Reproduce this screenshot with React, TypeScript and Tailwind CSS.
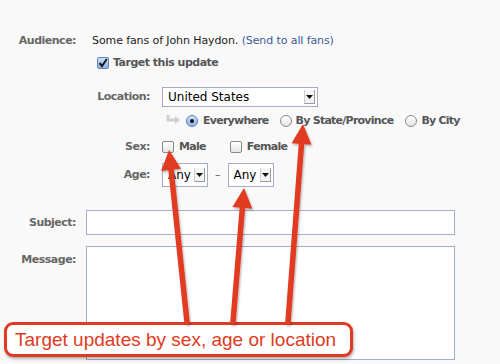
const font = { fontFamily: '"DejaVu Sans", "Liberation Sans", sans-serif' };

function Select({ label, className }: { label: string; className: string }) {
  return (
    <div className={`flex items-center border border-[#a4adc9] bg-white pl-[5px] ${className}`}>
      <span className="flex-1 text-[12px] text-black">{label}</span>
      <span className="mr-[2px] flex h-[14px] w-[11px] items-center justify-center border-b border-l border-r border-b-[#9a9a9a] border-l-[#d0d0d0] border-r-[#9a9a9a] bg-[#f4f4f4]">
        <svg width="7" height="4" viewBox="0 0 7 4">
          <path d="M0 0h7L3.5 4z" fill="#111" />
        </svg>
      </span>
    </div>
  );
}

function Check({ checked }: { checked?: boolean }) {
  return (
    <span
      className={`flex h-[12px] w-[12px] items-center justify-center rounded-[2px] border ${
        checked ? "border-[#5b84c4] bg-gradient-to-b from-[#cfe0f5] to-[#8fb3e3]" : "border-[#8a8a8a] bg-gradient-to-b from-white to-[#e6e6e6]"
      }`}
    >
      {checked && (
        <svg width="10" height="10" viewBox="0 0 10 10">
          <path d="M1.5 5l2.5 3L8.8 1" stroke="#1a1a1a" strokeWidth="2" fill="none" />
        </svg>
      )}
    </span>
  );
}

function Radio({ on }: { on?: boolean }) {
  return (
    <span
      className={`flex h-[12px] w-[12px] items-center justify-center rounded-full border ${
        on ? "border-[#4d79b8] bg-gradient-to-b from-[#d5e4f7] to-[#8fb3e3]" : "border-[#8a8a8a] bg-gradient-to-b from-white to-[#e3e3e3]"
      }`}
    >
      {on && <span className="h-[4px] w-[4px] rounded-full bg-[#111]" />}
    </span>
  );
}

function arrow(x1: number, y1: number, x2: number, y2: number) {
  const dx = x2 - x1;
  const dy = y2 - y1;
  const len = Math.hypot(dx, dy);
  const ux = dx / len;
  const uy = dy / len;
  const bx = x2 - ux * 20;
  const by = y2 - uy * 20;
  const nx = -uy;
  const ny = ux;
  return {
    shaft: `M${x1} ${y1} L${bx + ux * 2} ${by + uy * 2}`,
    head: `M${x2} ${y2} L${bx + nx * 10} ${by + ny * 10} L${bx - nx * 10} ${by - ny * 10} Z`,
  };
}

const arrows = [arrow(187, 322, 169, 150), arrow(233, 322, 244, 188), arrow(288, 322, 303, 124)];

export default function App() {
  return (
    <div className="relative h-[364px] w-[500px] overflow-hidden bg-[#f9f9f9] text-[11px] leading-[14px]" style={font}>
      <div className="pt-[34px]">
        {/* Audience */}
        <div className="flex">
          <div className="w-[76px] text-right font-bold tracking-[-0.5px] text-[#666]">Audience:</div>
          <div className="ml-[16px] tracking-[-0.1px] text-[#222]">
            Some fans of John Haydon. <span className="text-[#3b5998]">(Send to all fans)</span>
          </div>
        </div>
        <div className="ml-[97px] mt-[8px] flex items-center gap-[4px]">
          <Check checked />
          <span className="font-bold tracking-[-0.5px] text-[#555]">Target this update</span>
        </div>

        {/* Location */}
        <div className="mt-[17px] flex items-center">
          <div className="w-[150px] text-right font-bold tracking-[-0.5px] text-[#666]">Location:</div>
          <Select label="United States" className="ml-[12px] h-[20px] w-[156px]" />
        </div>
        <div className="ml-[166px] mt-[7px] flex items-center font-bold tracking-[-0.75px] text-[#555]">
          <svg width="16" height="12" viewBox="0 0 16 12" className="mr-[4px]">
            <path d="M2 0v5h8" stroke="#cfcfcf" strokeWidth="3" fill="none" />
            <path d="M9 1l5 4-5 4z" fill="#cfcfcf" />
          </svg>
          <Radio on />
          <span className="ml-[5px]">Everywhere</span>
          <span className="ml-[11px]"><Radio /></span>
          <span className="ml-[4px]">By State/Province</span>
          <span className="ml-[12px]"><Radio /></span>
          <span className="ml-[4px]">By City</span>
        </div>

        {/* Sex */}
        <div className="mt-[12px] flex items-center">
          <div className="w-[150px] text-right font-bold tracking-[-0.5px] text-[#666]">Sex:</div>
          <span className="ml-[12px]"><Check /></span>
          <span className="ml-[5px] font-bold tracking-[-0.7px] text-[#555]">Male</span>
          <span className="ml-[24px]"><Check /></span>
          <span className="ml-[5px] font-bold tracking-[-0.7px] text-[#555]">Female</span>
        </div>

        {/* Age */}
        <div className="mt-[9px] flex items-center">
          <div className="w-[150px] text-right font-bold tracking-[-0.5px] text-[#666]">Age:</div>
          <Select label="Any" className="ml-[12px] h-[24px] w-[46px]" />
          <span className="mx-[7px] text-[#555]">–</span>
          <Select label="Any" className="h-[24px] w-[46px]" />
        </div>

        {/* Subject */}
        <div className="mt-[23px] flex items-center">
          <div className="w-[76px] text-right font-bold tracking-[-0.5px] text-[#666]">Subject:</div>
          <div className="ml-[10px] h-[25px] w-[369px] border border-[#a4adc9] bg-white" />
        </div>

        {/* Message */}
        <div className="mt-[11px] flex items-start">
          <div className="w-[76px] pt-[7px] text-right font-bold tracking-[-0.5px] text-[#666]">Message:</div>
          <div className="ml-[10px] h-[114px] w-[369px] border border-[#a4adc9] bg-white" />
        </div>
      </div>

      {/* Annotation callout */}
      <div
        className="absolute left-[4px] top-[322px] flex h-[35px] w-[349px] items-center whitespace-nowrap rounded-[9px] border-[3px] border-[#e13a22] bg-white pl-[8px] text-[19px] text-[#e13a22] shadow-[1px_2px_3px_rgba(0,0,0,0.3)]"
        style={{ fontFamily: '"Liberation Sans", Arial, sans-serif' }}
      >
        Target updates by sex, age or location
      </div>
      <svg className="pointer-events-none absolute left-0 top-0" width="500" height="364">
        <defs>
          <filter id="sh" x="-20%" y="-20%" width="140%" height="140%">
            <feDropShadow dx="1" dy="1.5" stdDeviation="1" floodColor="#000" floodOpacity="0.3" />
          </filter>
        </defs>
        {arrows.map((a, i) => (
          <g key={i} filter="url(#sh)">
            <path d={a.shaft} stroke="#e13a22" strokeWidth="5.5" strokeLinecap="round" />
            <path d={a.head} fill="#e13a22" />
          </g>
        ))}
      </svg>
    </div>
  );
}
